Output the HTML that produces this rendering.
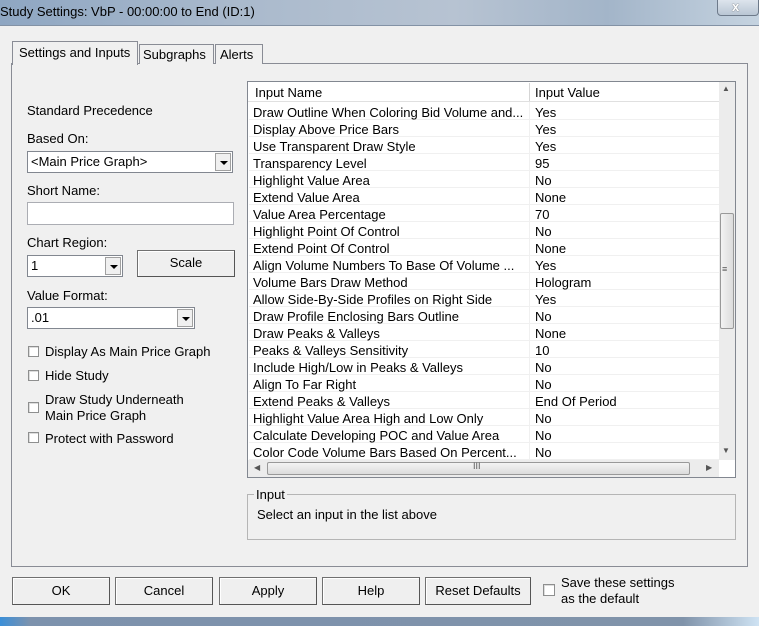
<!DOCTYPE html>
<html><head><style>
*{box-sizing:border-box;margin:0;padding:0}
body{width:759px;height:626px;overflow:hidden;background:#f0f0f0;font-family:"Liberation Sans",sans-serif;font-size:13px;color:#000;position:relative}
.a{position:absolute}
.t{position:absolute;white-space:nowrap}
.combo{position:absolute;background:#fff;border:1px solid #828790;padding:2px 0 0 3px}
.combo .dd{position:absolute;right:1px;top:1px;bottom:1px;width:16px;background:#f0f0f0;border:1px solid #a0a0a0}
.combo .dd:after{content:"";position:absolute;left:4px;top:7px;border:4px solid transparent;border-top:4px solid #000;border-bottom:0}
.btn{position:absolute;background:#efefef;border:1px solid #707070;border-right-color:#555;border-bottom-color:#555;box-shadow:inset 1px 1px #fff;text-align:center;line-height:26px}
.cb{position:absolute;width:11px;height:11px;border:1px solid #8e8f8f;background:#fff;box-shadow:inset 1px 1px #ddd}
.row{position:absolute;left:249px;width:470px;height:17px;border-bottom:1px solid #f0f0f0;background:#fff}
.row span{position:absolute;top:2px}
</style></head><body>
<div class="a" style="left:0;top:0;width:759px;height:26px;background:linear-gradient(90deg,#8ea6c2 0%,#a9b9cc 30%,#b7c3d2 60%,#a3b5c9 80%,#c5d3e0 100%);border-bottom:1px solid #8392a5"></div>
<div class="t" style="left:0;top:4px;font-size:13px">Study Settings: VbP - 00:00:00 to End (ID:1)</div>
<div class="a" style="left:717px;top:-2px;width:42px;height:18px;border:1px solid #6d7a8a;border-radius:0 0 4px 4px;background:linear-gradient(#dfe6ee,#b9c6d4)"></div>
<div class="t" style="left:732px;top:-1px;font-weight:bold;color:#fff;text-shadow:0 0 1px #333">x</div>

<div class="a" style="left:11px;top:63px;width:737px;height:504px;border:1px solid #898c95;background:#f0f0f0"></div>
<div class="a" style="left:12px;top:41px;width:126px;height:24px;border:1px solid #898c95;border-bottom:none;background:#f0f0f0"></div>
<div class="t" style="left:19px;top:45px">Settings and Inputs</div>
<div class="a" style="left:139px;top:44px;width:75px;height:20px;border:1px solid #898c95;border-bottom:none;background:#f0f0f0"></div>
<div class="t" style="left:143px;top:47px">Subgraphs</div>
<div class="a" style="left:215px;top:44px;width:48px;height:20px;border:1px solid #898c95;border-bottom:none;background:#f0f0f0"></div>
<div class="t" style="left:220px;top:47px">Alerts</div>

<div class="t" style="left:27px;top:103px">Standard Precedence</div>
<div class="t" style="left:27px;top:131px">Based On:</div>
<div class="combo" style="left:27px;top:151px;width:206px;height:22px">&lt;Main Price Graph&gt;<div class="dd"></div></div>
<div class="t" style="left:27px;top:183px">Short Name:</div>
<div class="a" style="left:27px;top:202px;width:207px;height:23px;background:#fff;border:1px solid #abadb3"></div>
<div class="t" style="left:27px;top:235px">Chart Region:</div>
<div class="combo" style="left:27px;top:255px;width:96px;height:22px">1<div class="dd"></div></div>
<div class="btn" style="left:137px;top:250px;width:98px;height:27px;line-height:24px">Scale</div>
<div class="t" style="left:27px;top:288px">Value Format:</div>
<div class="combo" style="left:27px;top:307px;width:168px;height:22px">.01<div class="dd"></div></div>
<div class="cb" style="left:28px;top:346px"></div><div class="t" style="left:45px;top:344px">Display As Main Price Graph</div>
<div class="cb" style="left:28px;top:370px"></div><div class="t" style="left:45px;top:368px">Hide Study</div>
<div class="cb" style="left:28px;top:402px"></div><div class="t" style="left:45px;top:392px;line-height:16px">Draw Study Underneath<br>Main Price Graph</div>
<div class="cb" style="left:28px;top:432px"></div><div class="t" style="left:45px;top:431px">Protect with Password</div>

<div class="a" style="left:247px;top:81px;width:489px;height:397px;border:1px solid #828790;background:#fff"></div>
<div class="a" style="left:248px;top:82px;width:471px;height:20px;background:#fff;border-bottom:1px solid #e0e0e0"></div>
<div class="a" style="left:529px;top:83px;width:1px;height:18px;background:#d5d5d5"></div>
<div class="t" style="left:255px;top:85px">Input Name</div>
<div class="t" style="left:535px;top:85px">Input Value</div>
<div id="rows"></div>
<div class="a" style="left:529px;top:102px;width:1px;height:358px;background:#f0f0f0"></div>
<div class="a" style="left:719px;top:82px;width:16px;height:378px;background:#ececec"></div>
<div class="t" style="left:722px;top:84px;font-size:8px;color:#555">▲</div>
<div class="t" style="left:722px;top:446px;font-size:8px;color:#555">▼</div>
<div class="a" style="left:720px;top:213px;width:14px;height:116px;border:1px solid #999;border-radius:2px;background:linear-gradient(90deg,#f3f3f3,#dcdcdc)"></div>
<div class="t" style="left:722px;top:264px;font-size:9px;color:#555">≡</div>
<div class="a" style="left:248px;top:460px;width:471px;height:17px;background:#ececec"></div>
<div class="t" style="left:254px;top:463px;font-size:8px;color:#555">◀</div>
<div class="t" style="left:706px;top:463px;font-size:8px;color:#555">▶</div>
<div class="a" style="left:267px;top:462px;width:423px;height:13px;border:1px solid #999;border-radius:2px;background:linear-gradient(#f3f3f3,#dcdcdc)"></div>
<div class="t" style="left:473px;top:461px;font-size:9px;color:#555">III</div>

<div class="a" style="left:247px;top:494px;width:489px;height:46px;border:1px solid #b5b5b5"></div>
<div class="t" style="left:254px;top:487px;background:#f0f0f0;padding:0 2px 0 2px">Input</div>
<div class="t" style="left:257px;top:507px">Select an input in the list above</div>

<div class="btn" style="left:12px;top:577px;width:98px;height:28px">OK</div>
<div class="btn" style="left:115px;top:577px;width:98px;height:28px">Cancel</div>
<div class="btn" style="left:219px;top:577px;width:98px;height:28px">Apply</div>
<div class="btn" style="left:322px;top:577px;width:98px;height:28px">Help</div>
<div class="btn" style="left:425px;top:577px;width:106px;height:28px">Reset Defaults</div>
<div class="cb" style="left:543px;top:584px;width:12px;height:12px"></div>
<div class="t" style="left:561px;top:575px;line-height:16px">Save these settings<br>as the default</div>
<div class="a" style="left:0;top:617px;width:759px;height:9px;background:linear-gradient(90deg,#3b8fd8,#7d92ad 4%,#8093aa 90%,#cfe3f3)"></div>

<script>
var d=[["Draw Outline When Coloring Bid Volume and...","Yes"],["Display Above Price Bars","Yes"],["Use Transparent Draw Style","Yes"],["Transparency Level","95"],["Highlight Value Area","No"],["Extend Value Area","None"],["Value Area Percentage","70"],["Highlight Point Of Control","No"],["Extend Point Of Control","None"],["Align Volume Numbers To Base Of Volume ...","Yes"],["Volume Bars Draw Method","Hologram"],["Allow Side-By-Side Profiles on Right Side","Yes"],["Draw Profile Enclosing Bars Outline","No"],["Draw Peaks & Valleys","None"],["Peaks & Valleys Sensitivity","10"],["Include High/Low in Peaks & Valleys","No"],["Align To Far Right","No"],["Extend Peaks & Valleys","End Of Period"],["Highlight Value Area High and Low Only","No"],["Calculate Developing POC and Value Area","No"],["Color Code Volume Bars Based On Percent...","No"]];
var h="";d.forEach(function(r,i){h+='<div class="row" style="top:'+(103+i*17)+'px"><span style="left:4px">'+r[0].replace(/&/g,"&amp;")+'</span><span style="left:286px">'+r[1]+'</span></div>'});
document.getElementById("rows").innerHTML=h;
</script>
</body></html>
